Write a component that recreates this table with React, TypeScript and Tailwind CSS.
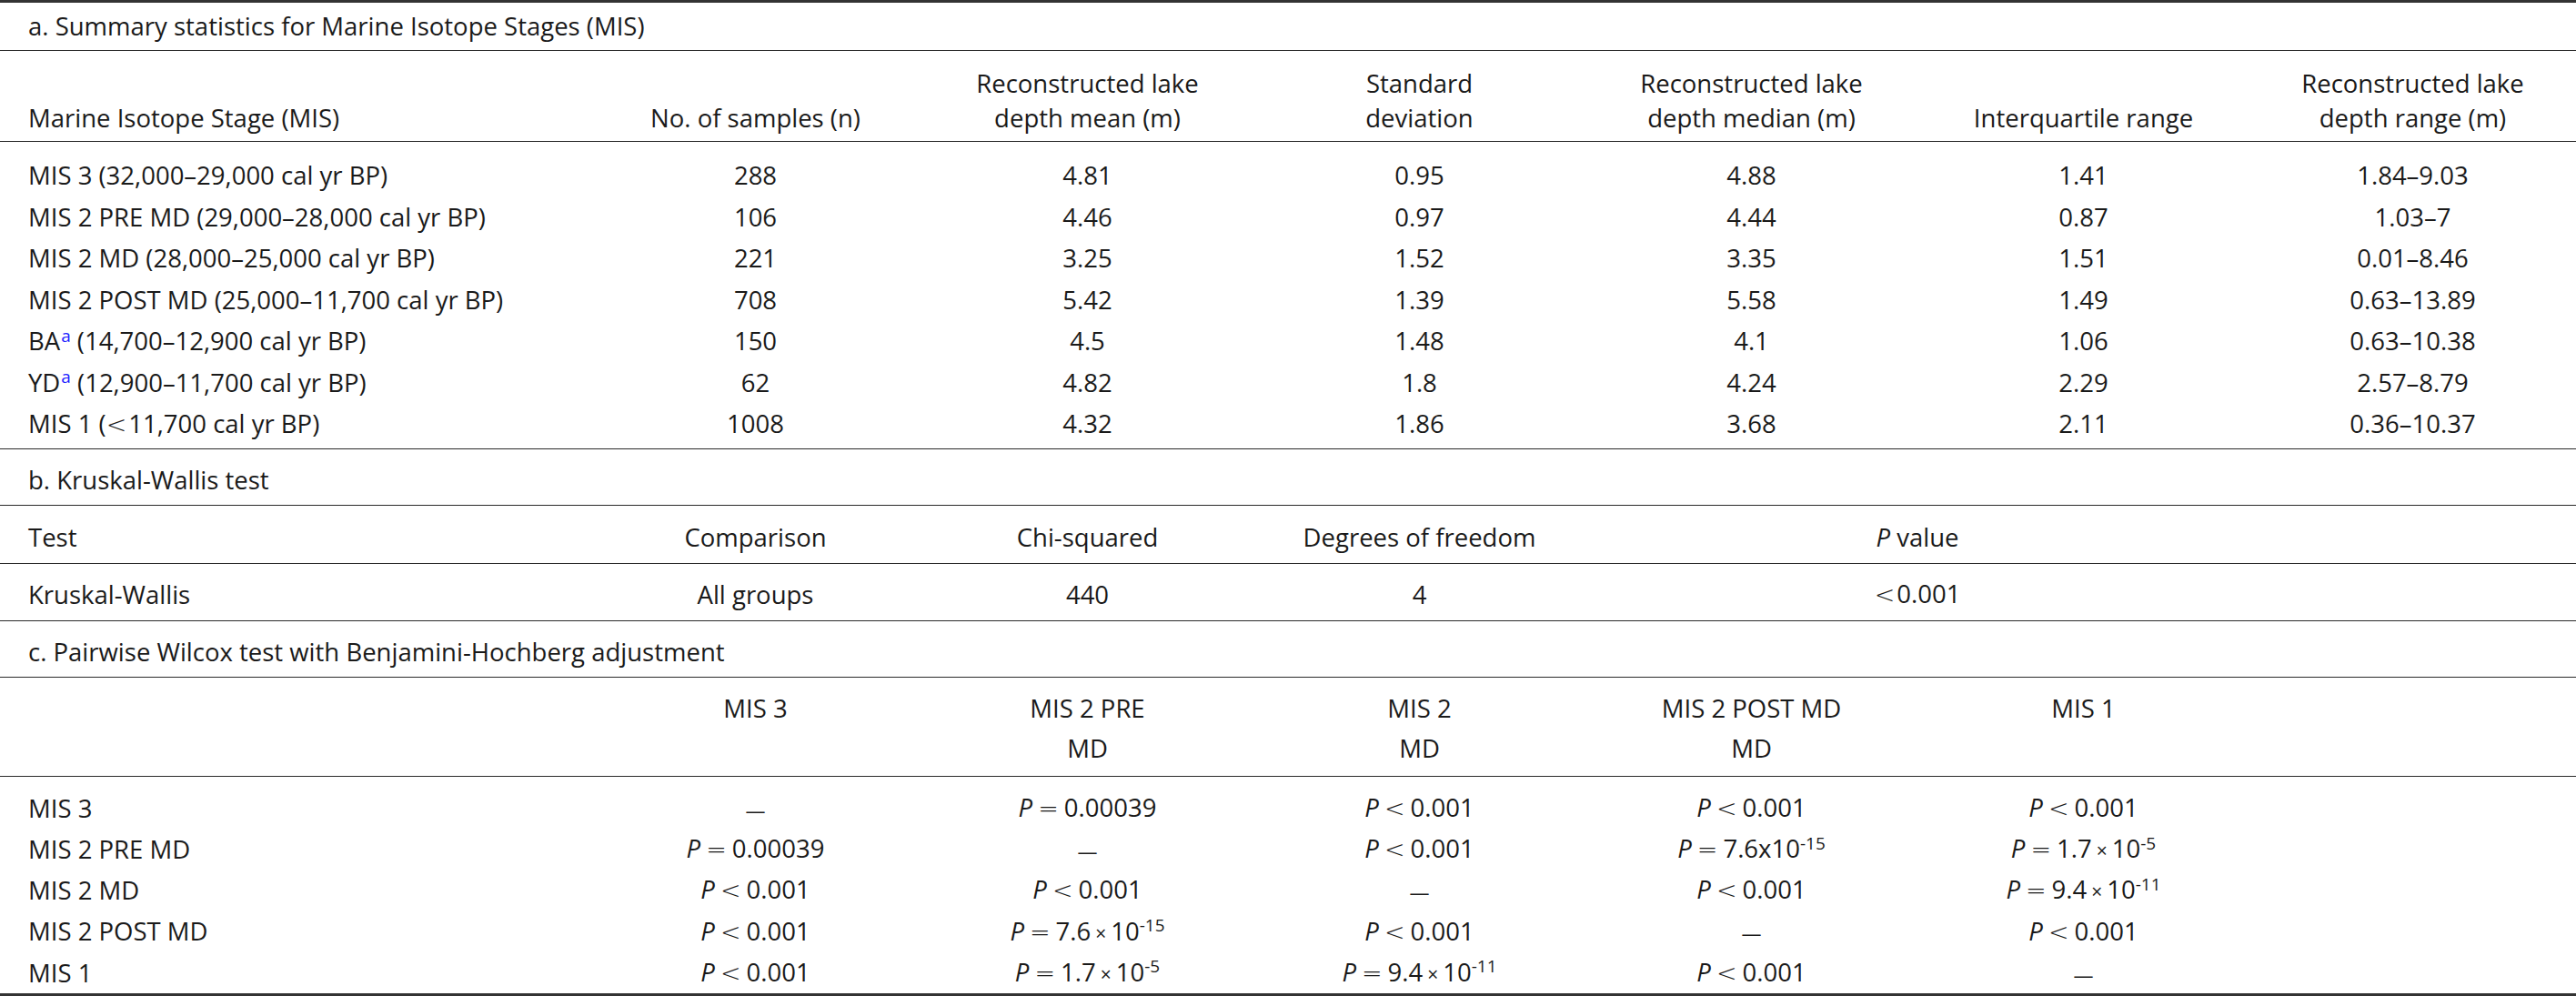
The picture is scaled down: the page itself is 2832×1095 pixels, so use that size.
import React from 'react';

const cols = "grid grid-cols-[648px_repeat(5,365px)_1fr]";

type Cell = React.ReactNode;

const Rule = ({ thick = false }: { thick?: boolean }) => (
    <div className={thick ? "h-[3px] bg-[#333333]" : "h-px bg-[#2a2a2a]"} />
);

// math-ish operators are thin and wide in the original
const Op: React.FC<{ c: string; tight?: boolean }> = ({ c, tight }) => (
    <span className={`font-['DejaVu_Sans',sans-serif] font-extralight text-[27px] ${tight ? 'mr-[2px]' : 'mx-[6px]'}`}>{c}</span>
);

const Note = ({ children }: { children: React.ReactNode }) => (
    <sup className="text-[#1f1fff] text-[19px] ml-[1px]">{children}</sup>
);

const Pv: React.FC<{ op: '<' | '='; v: string; exp?: string; plainX?: boolean }> = ({ op, v, exp, plainX }) => (
    <span className="whitespace-nowrap">
        <i>P</i>
        <Op c={op} />
        {v}
        {exp && !plainX && (
            <>
                <span className="mx-[5px] text-[21px]">×</span>10<sup className="text-[19px]">{exp}</sup>
            </>
        )}
        {exp && plainX && (
            <>
                x10<sup className="text-[19px]">{exp}</sup>
            </>
        )}
    </span>
);

const Dash = () => <span className="text-[22px]">—</span>;

const Title = ({ text, first = false }: { text: string; first?: boolean }) => (
    <div className={`flex items-center px-[31px] ${first ? 'h-[52px]' : 'h-[61px] pt-[8px]'}`}>{text}</div>
);

const statRows: Cell[][] = [
    ['MIS 3 (32,000–29,000 cal yr BP)', '288', '4.81', '0.95', '4.88', '1.41', '1.84–9.03'],
    ['MIS 2 PRE MD (29,000–28,000 cal yr BP)', '106', '4.46', '0.97', '4.44', '0.87', '1.03–7'],
    ['MIS 2 MD (28,000–25,000 cal yr BP)', '221', '3.25', '1.52', '3.35', '1.51', '0.01–8.46'],
    ['MIS 2 POST MD (25,000–11,700 cal yr BP)', '708', '5.42', '1.39', '5.58', '1.49', '0.63–13.89'],
    [<>BA<Note>a</Note> (14,700–12,900 cal yr BP)</>, '150', '4.5', '1.48', '4.1', '1.06', '0.63–10.38'],
    [<>YD<Note>a</Note> (12,900–11,700 cal yr BP)</>, '62', '4.82', '1.8', '4.24', '2.29', '2.57–8.79'],
    [<>MIS 1 (<Op c="<" tight />11,700 cal yr BP)</>, '1008', '4.32', '1.86', '3.68', '2.11', '0.36–10.37'],
];

const statHead: Cell[] = [
    'Marine Isotope Stage (MIS)',
    'No. of samples (n)',
    <>Reconstructed lake<br />depth mean (m)</>,
    <>Standard<br />deviation</>,
    <>Reconstructed lake<br />depth median (m)</>,
    'Interquartile range',
    <>Reconstructed lake<br />depth range (m)</>,
];

const lt = <Pv op="<" v="0.001" />;

const pairRows: Cell[][] = [
    ['MIS 3', <Dash />, <Pv op="=" v="0.00039" />, lt, lt, lt],
    ['MIS 2 PRE MD', <Pv op="=" v="0.00039" />, <Dash />, lt, <Pv op="=" v="7.6" exp="-15" plainX />, <Pv op="=" v="1.7" exp="-5" />],
    ['MIS 2 MD', lt, lt, <Dash />, lt, <Pv op="=" v="9.4" exp="-11" />],
    ['MIS 2 POST MD', lt, <Pv op="=" v="7.6" exp="-15" />, lt, <Dash />, lt],
    ['MIS 1', lt, <Pv op="=" v="1.7" exp="-5" />, <Pv op="=" v="9.4" exp="-11" />, lt, <Dash />],
];

const pairHead: Cell[] = ['', 'MIS 3', <>MIS 2 PRE<br />MD</>, <>MIS 2<br />MD</>, <>MIS 2 POST MD<br />MD</>, 'MIS 1', ''];

const App = () => {
    return (
        <div className="w-[2832px] h-[1095px] bg-white text-[#1a1a1a] text-[27.5px] font-['Open_Sans',sans-serif] overflow-hidden">
            <Rule thick />

            {/* a. summary */}
            <Title text="a. Summary statistics for Marine Isotope Stages (MIS)" first />
            <Rule />
            <div className={`${cols} h-[99px] items-end pb-[6px] leading-[38px]`}>
                {statHead.map((h, i) => (
                    <div key={i} className={i === 0 ? 'pl-[31px]' : 'text-center'}>{h}</div>
                ))}
            </div>
            <Rule />
            <div className="pt-[14px] pb-[4px]">
                {statRows.map((row, r) => (
                    <div key={r} className={`${cols} h-[45.5px] items-center`}>
                        {row.map((c, i) => (
                            <div key={i} className={i === 0 ? 'pl-[31px]' : 'text-center'}>{c}</div>
                        ))}
                    </div>
                ))}
            </div>
            <Rule />

            {/* b. kruskal-wallis */}
            <Title text="b. Kruskal-Wallis test" />
            <Rule />
            <div className={`${cols} h-[63px] pt-[8px] items-center`}>
                <div className="pl-[31px]">Test</div>
                <div className="text-center">Comparison</div>
                <div className="text-center">Chi-squared</div>
                <div className="text-center">Degrees of freedom</div>
                <div className="col-span-2 text-center"><i>P</i> value</div>
            </div>
            <Rule />
            <div className={`${cols} h-[62px] pt-[6px] items-center`}>
                <div className="pl-[31px]">Kruskal-Wallis</div>
                <div className="text-center">All groups</div>
                <div className="text-center">440</div>
                <div className="text-center">4</div>
                <div className="col-span-2 text-center"><Op c="<" tight />0.001</div>
            </div>
            <Rule />

            {/* c. pairwise */}
            <Title text="c. Pairwise Wilcox test with Benjamini-Hochberg adjustment" />
            <Rule />
            <div className={`${cols} h-[108px] items-start pt-[12px] leading-[44px]`}>
                {pairHead.map((h, i) => (
                    <div key={i} className="text-center">{h}</div>
                ))}
            </div>
            <Rule />
            <div className="pt-[12px]">
                {pairRows.map((row, r) => (
                    <div key={r} className={`${cols} h-[45.25px] items-center`}>
                        {row.map((c, i) => (
                            <div key={i} className={i === 0 ? 'pl-[31px]' : 'text-center'}>{c}</div>
                        ))}
                    </div>
                ))}
            </div>
            <Rule thick />
        </div>
    );
};

export default App;
